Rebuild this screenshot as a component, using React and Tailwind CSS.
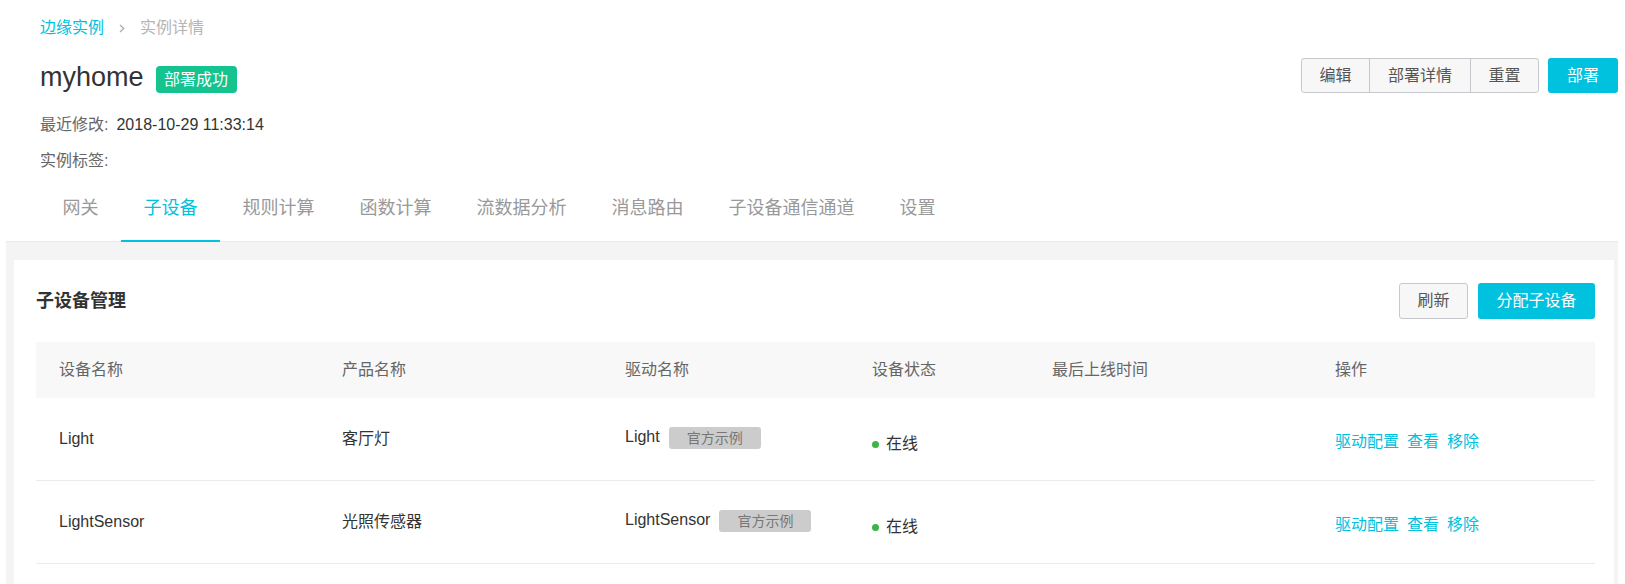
import React from "react";

const tabs = ["网关", "子设备", "规则计算", "函数计算", "流数据分析", "消息路由", "子设备通信通道", "设置"];

const rows = [
  { name: "Light", product: "客厅灯", driver: "Light" },
  { name: "LightSensor", product: "光照传感器", driver: "LightSensor" },
];

export default function App() {
  return (
    <div className="h-[584px] w-[1625px] overflow-hidden bg-white flex flex-col font-['Liberation_Sans','Noto_Sans_CJK_SC',sans-serif]">
      {/* Header */}
      <div className="flex justify-between">
        <div className="pl-[40px] pt-[16px]">
          <div className="flex items-center text-[16px] leading-[24px]">
            <span className="text-[#00c1de]">边缘实例</span>
            <svg className="ml-[15px] mr-[15px]" width="6" height="9" viewBox="0 0 6 9">
              <path d="M1 1 L4.8 4.5 L1 8" fill="none" stroke="#aaaaaa" strokeWidth="1.2" />
            </svg>
            <span className="text-[#b5b5b5]">实例详情</span>
          </div>
          <div className="mt-[19px] h-[36px] flex items-start">
            <span className="text-[27px] leading-[36px] text-[#333]">myhome</span>
            <span className="ml-[12px] mt-[7px] h-[27px] px-[8.5px] rounded-[4px] bg-[#14c38e] text-white text-[16px] leading-[27px]">
              部署成功
            </span>
          </div>
          <div className="mt-[18px] flex text-[16px] leading-[24px]">
            <span className="text-[#666]">最近修改:</span>
            <span className="ml-[8px] text-[#333]">2018-10-29 11:33:14</span>
          </div>
          <div className="mt-[12px] text-[16px] leading-[24px] text-[#666]">实例标签:</div>
        </div>
        <div className="mt-[58px] mr-[7px] flex items-start gap-[9px]">
          <div className="flex border border-[#c6c8cd] rounded-[3px] bg-[#f7f7f7] text-[16px] text-[#555]">
            <button className="w-[67px] h-[33px] leading-[33px]">编辑</button>
            <button className="w-[101px] h-[33px] leading-[33px] border-l border-[#c6c8cd]">部署详情</button>
            <button className="w-[68px] h-[33px] leading-[33px] border-l border-[#c6c8cd]">重置</button>
          </div>
          <button className="w-[70px] h-[35px] rounded-[3px] bg-[#00c1de] text-white text-[16px] leading-[35px]">
            部署
          </button>
        </div>
      </div>

      {/* Tabs */}
      <div className="relative z-10 mt-[23px] pl-[40px] flex">
        {tabs.map((t, i) => (
          <div
            key={t}
            className={
              i === 1
                ? "px-[22.5px] pb-[20px] text-[18px] leading-[24px] border-b-2 border-[#00c1de] text-[#00c1de]"
                : "px-[22.5px] pb-[20px] text-[18px] leading-[24px] border-b-2 border-transparent text-[#999]"
            }
          >
            {t}
          </div>
        ))}
      </div>

      {/* Gray content area */}
      <div className="-mt-px flex-1 ml-[6px] mr-[7px] border-t border-[#ebebeb] bg-[#f4f4f4] pt-[18px] pl-[8px] pr-[4px] flex flex-col">
        <div className="flex-1 bg-white pl-[22px] pr-[19px] pt-[23px]">
          <div className="flex justify-between items-center h-[36px]">
            <span className="text-[18px] font-bold text-[#333] leading-[24px]">子设备管理</span>
            <div className="flex items-center">
              <button className="h-[36px] px-[17.5px] border border-[#c6c8cd] rounded-[3px] bg-[#f7f7f7] text-[16px] text-[#555]">
                刷新
              </button>
              <button className="ml-[10px] h-[36px] px-[18.5px] rounded-[3px] bg-[#00c1de] text-white text-[16px]">
                分配子设备
              </button>
            </div>
          </div>

          {/* Table */}
          <div className="mt-[23px]">
            <div className="grid grid-cols-[283px_283px_247px_180px_283px_1fr] h-[56px] items-center bg-[#f8f8f8] text-[16px] text-[#666] leading-[24px]">
              <div className="pl-[23px]">设备名称</div>
              <div className="pl-[23px]">产品名称</div>
              <div className="pl-[23px]">驱动名称</div>
              <div className="pl-[23px]">设备状态</div>
              <div className="pl-[23px]">最后上线时间</div>
              <div className="pl-[23px]">操作</div>
            </div>
            {rows.map((r) => (
              <div
                key={r.name}
                className="grid grid-cols-[283px_283px_247px_180px_283px_1fr] h-[83px] items-center border-b border-[#ebebeb] text-[16px] text-[#333] leading-[24px]"
              >
                <div className="pl-[23px]">{r.name}</div>
                <div className="pl-[23px]">{r.product}</div>
                <div className="pl-[23px] flex items-center">
                  <span className="mb-[4px]">{r.driver}</span>
                  <span className="ml-[9px] mb-[2px] h-[22px] px-[18px] rounded-[3px] bg-[#cccccc] text-[14px] leading-[22px] text-[#777]">
                    官方示例
                  </span>
                </div>
                <div className="pl-[23px] mt-[9px] flex items-center">
                  <span className="w-[7px] h-[7px] rounded-full bg-[#3cb44b] mt-[1px]"></span>
                  <span className="ml-[7px]">在线</span>
                </div>
                <div className="pl-[23px]"></div>
                <div className="pl-[23px] mt-[5px] flex gap-[8px] text-[#00c1de]">
                  <span>驱动配置</span>
                  <span>查看</span>
                  <span>移除</span>
                </div>
              </div>
            ))}
          </div>
        </div>
      </div>
    </div>
  );
}
